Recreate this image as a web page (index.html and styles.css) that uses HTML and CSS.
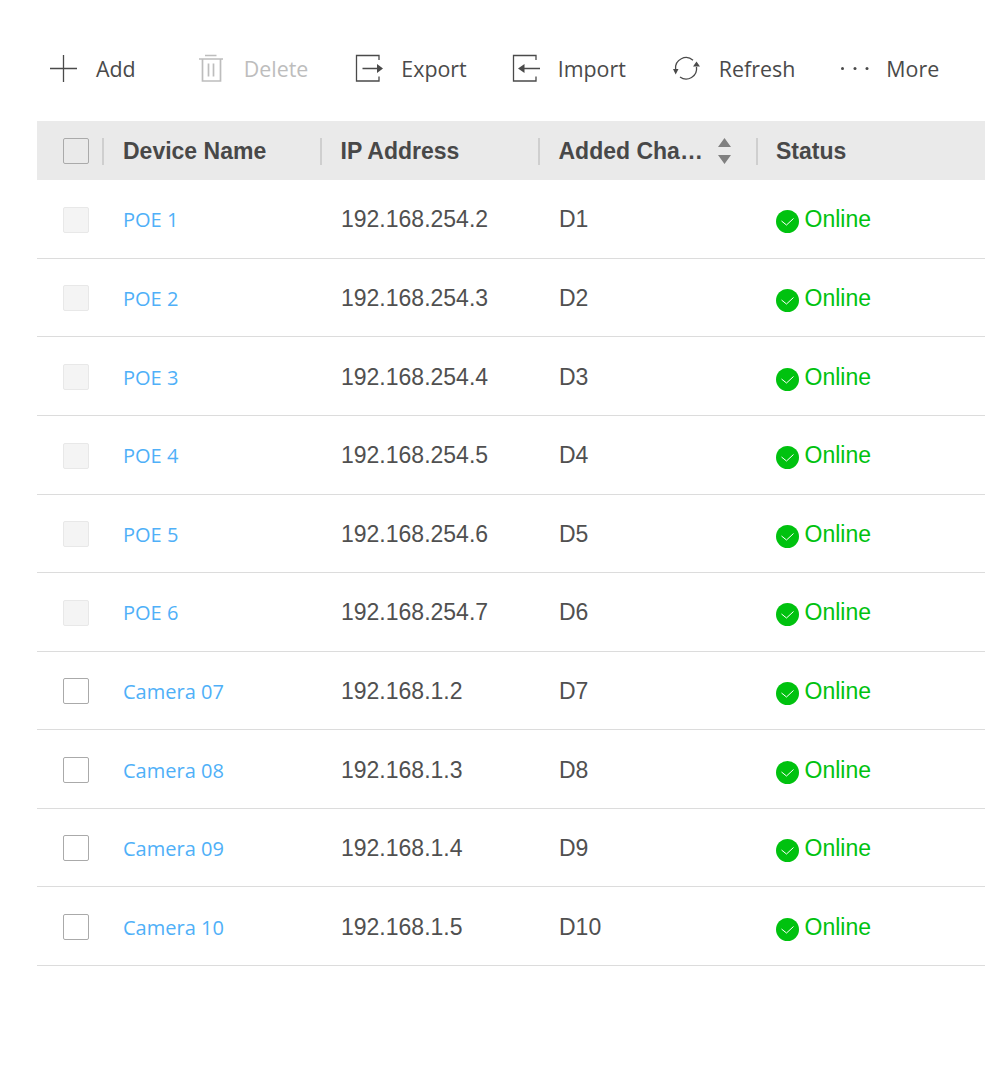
FILE: index.html
```html
<!DOCTYPE html>
<html lang="en">
<head>
<meta charset="utf-8">
<title>Devices</title>
<link rel="stylesheet" href="styles.css">
</head>
<body>
<div class="page">
  <div class="toolbar">
    <div class="tool tool-add"><svg class="icon" viewBox="0 0 27 27"><path d="M0 13.5H27M13.5 0V27"/></svg><span>Add</span></div>
    <div class="tool tool-delete is-disabled"><svg class="icon" viewBox="0 0 27 27"><path d="M7 .5H18.500M1 4H25M4.500 4V26H22.500V4M10.500 8.500V21.500M15.500 8.500V21.500"/></svg><span>Delete</span></div>
    <div class="tool tool-export"><svg class="icon" viewBox="0 0 27 27"><path d="M23 5V.5H.5V26H23V21.500M6.500 13.500H21"/><path class="fill" d="M21 9L27 13.500L21 18Z"/></svg><span>Export</span></div>
    <div class="tool tool-import"><svg class="icon" viewBox="0 0 27 27"><path d="M23 5V.5H.5V26H23V21.500M27 13.500H10"/><path class="fill" d="M11.500 9L5 13.500L11.500 18Z"/></svg><span>Import</span></div>
    <div class="tool tool-refresh"><svg class="icon" viewBox="0 0 27 27"><path d="M2.600 14A10.500 10.500 0 0 1 20 5.200M23.500 12A10.500 10.500 0 0 1 7 22"/><path class="fill" d="M20 11.500L23.500 6.500L27 11.500ZM0 14H5.500L2.700 19.500Z"/></svg><span>Refresh</span></div>
    <div class="tool tool-more"><svg class="icon" viewBox="0 0 27 27"><circle class="fill" cx="1.500" cy="13.500" r="1.500"/><circle class="fill" cx="14" cy="13.500" r="1.500"/><circle class="fill" cx="26" cy="13.500" r="1.500"/></svg><span>More</span></div>
  </div>

  <div class="table">
    <div class="row head">
      <div class="cell cell-check"><span class="check"></span></div>
      <div class="cell th th-first"><span class="label">Device Name</span></div>
      <div class="cell th"><span class="label">IP Address</span></div>
      <div class="cell th"><span class="label label-short">Added Cha…</span>
        <svg class="sort" viewBox="0 0 13 26"><path d="M6.500 0L13 9H0ZM0 17H13L6.500 26Z"/></svg></div>
      <div class="cell th th-status"><span class="label">Status</span></div>
    </div>

    <div class="row"><div class="cell cell-check"><span class="check is-off"></span></div><div class="cell"><a class="name">POE 1</a></div><div class="cell">192.168.254.2</div><div class="cell">D1</div><div class="cell status"><svg class="ok" viewBox="0 0 23 23"><circle cx="11.500" cy="11.500" r="11.500"/><path d="M5.500 11L10.500 15L17.500 8.500"/></svg><span>Online</span></div></div>
    <div class="row"><div class="cell cell-check"><span class="check is-off"></span></div><div class="cell"><a class="name">POE 2</a></div><div class="cell">192.168.254.3</div><div class="cell">D2</div><div class="cell status"><svg class="ok" viewBox="0 0 23 23"><circle cx="11.500" cy="11.500" r="11.500"/><path d="M5.500 11L10.500 15L17.500 8.500"/></svg><span>Online</span></div></div>
    <div class="row"><div class="cell cell-check"><span class="check is-off"></span></div><div class="cell"><a class="name">POE 3</a></div><div class="cell">192.168.254.4</div><div class="cell">D3</div><div class="cell status"><svg class="ok" viewBox="0 0 23 23"><circle cx="11.500" cy="11.500" r="11.500"/><path d="M5.500 11L10.500 15L17.500 8.500"/></svg><span>Online</span></div></div>
    <div class="row"><div class="cell cell-check"><span class="check is-off"></span></div><div class="cell"><a class="name">POE 4</a></div><div class="cell">192.168.254.5</div><div class="cell">D4</div><div class="cell status"><svg class="ok" viewBox="0 0 23 23"><circle cx="11.500" cy="11.500" r="11.500"/><path d="M5.500 11L10.500 15L17.500 8.500"/></svg><span>Online</span></div></div>
    <div class="row"><div class="cell cell-check"><span class="check is-off"></span></div><div class="cell"><a class="name">POE 5</a></div><div class="cell">192.168.254.6</div><div class="cell">D5</div><div class="cell status"><svg class="ok" viewBox="0 0 23 23"><circle cx="11.500" cy="11.500" r="11.500"/><path d="M5.500 11L10.500 15L17.500 8.500"/></svg><span>Online</span></div></div>
    <div class="row"><div class="cell cell-check"><span class="check is-off"></span></div><div class="cell"><a class="name">POE 6</a></div><div class="cell">192.168.254.7</div><div class="cell">D6</div><div class="cell status"><svg class="ok" viewBox="0 0 23 23"><circle cx="11.500" cy="11.500" r="11.500"/><path d="M5.500 11L10.500 15L17.500 8.500"/></svg><span>Online</span></div></div>
    <div class="row"><div class="cell cell-check"><span class="check"></span></div><div class="cell"><a class="name">Camera 07</a></div><div class="cell">192.168.1.2</div><div class="cell">D7</div><div class="cell status"><svg class="ok" viewBox="0 0 23 23"><circle cx="11.500" cy="11.500" r="11.500"/><path d="M5.500 11L10.500 15L17.500 8.500"/></svg><span>Online</span></div></div>
    <div class="row"><div class="cell cell-check"><span class="check"></span></div><div class="cell"><a class="name">Camera 08</a></div><div class="cell">192.168.1.3</div><div class="cell">D8</div><div class="cell status"><svg class="ok" viewBox="0 0 23 23"><circle cx="11.500" cy="11.500" r="11.500"/><path d="M5.500 11L10.500 15L17.500 8.500"/></svg><span>Online</span></div></div>
    <div class="row"><div class="cell cell-check"><span class="check"></span></div><div class="cell"><a class="name">Camera 09</a></div><div class="cell">192.168.1.4</div><div class="cell">D9</div><div class="cell status"><svg class="ok" viewBox="0 0 23 23"><circle cx="11.500" cy="11.500" r="11.500"/><path d="M5.500 11L10.500 15L17.500 8.500"/></svg><span>Online</span></div></div>
    <div class="row"><div class="cell cell-check"><span class="check"></span></div><div class="cell"><a class="name">Camera 10</a></div><div class="cell">192.168.1.5</div><div class="cell">D10</div><div class="cell status"><svg class="ok" viewBox="0 0 23 23"><circle cx="11.500" cy="11.500" r="11.500"/><path d="M5.500 11L10.500 15L17.500 8.500"/></svg><span>Online</span></div></div>
  </div>
</div>
</body>
</html>
```
FILE: styles.css
```css
html, body {
  margin: 0;
  padding: 0;
  background: #fff;
  overflow: hidden;
}

.page {
  width: 985px;
  height: 1090px;
  padding: 55px 0 0 37px;
  box-sizing: border-box;
  font-family: "Liberation Sans", Arial, sans-serif;
  color: #505050;
}

.toolbar {
  display: flex;
  align-items: center;
  height: 27px;
  padding-left: 13px;
  gap: 46px;
  font-family: "Open Sans", sans-serif;
  font-size: 21.4px;
  color: #4a4a4a;
  white-space: nowrap;
}

.tool {
  display: flex;
  align-items: center;
  gap: 19px;
}

.tool-delete {
  margin-left: 16px;
}

.tool-delete .icon {
  stroke-width: 1.7;
}

.tool-export {
  margin-left: 2px;
  gap: 18px;
}

.tool-import {
  gap: 18px;
}

.tool-refresh {
  margin-left: 1px;
}

.tool-more {
  gap: 18px;
}

.is-disabled {
  color: #bdbdbd;
}

.icon {
  width: 27px;
  height: 27px;
  flex: none;
  overflow: visible;
  fill: none;
  stroke: currentColor;
  stroke-width: 1.3;
}

.icon .fill {
  fill: currentColor;
  stroke: none;
}

.table {
  margin-top: 39px;
  width: 948px;
}

.row {
  display: grid;
  grid-template-columns: 66.5px 218px 218px 218px 1fr;
  height: 78.58px;
  box-sizing: border-box;
  border-bottom: 1px solid #dcdcdc;
  font-size: 23px;
}

.head {
  height: 59.2px;
  background: #eaeaea;
  border-bottom: 0;
  font-weight: 700;
  color: #484848;
}

.cell {
  display: flex;
  align-items: center;
  padding: 2px 0 0 19.5px;
  min-width: 0;
  position: relative;
  box-sizing: border-box;
}

.cell-check {
  padding: 1.6px 0 0 26px;
}

.head .cell-check {
  padding: 0 0 0 26px;
}

.th {
  padding: 1px 0 0 19px;
  gap: 14.5px;
}

.th-first {
  padding-left: 19.5px;
}

.th-status {
  padding-left: 18.5px;
}

.th::before {
  content: "";
  position: absolute;
  left: -1.5px;
  top: 17px;
  height: 27px;
  width: 1.5px;
  background: #cfcfcf;
}

.label {
  white-space: nowrap;
}

.label-short {
  width: 145px;
  flex: none;
}

.sort {
  width: 13px;
  height: 26px;
  flex: none;
  fill: #808080;
}

.check {
  display: block;
  width: 26px;
  height: 26px;
  box-sizing: border-box;
  border: 1px solid #aaa;
  border-radius: 2px;
}

.check.is-off {
  background: #f4f4f4;
  border-color: #e8e8e8;
}

.name {
  font-family: "Open Sans", sans-serif;
  font-size: 20px;
  color: #4fb0f8;
}

.status {
  gap: 5.5px;
  color: #00c20f;
  padding-left: 18.5px;
}

.ok {
  width: 23px;
  height: 23px;
  flex: none;
  margin-top: 4px;
}

.ok circle {
  fill: #00c20f;
}

.ok path {
  fill: none;
  stroke: #fff;
  stroke-width: 1;
}
```
